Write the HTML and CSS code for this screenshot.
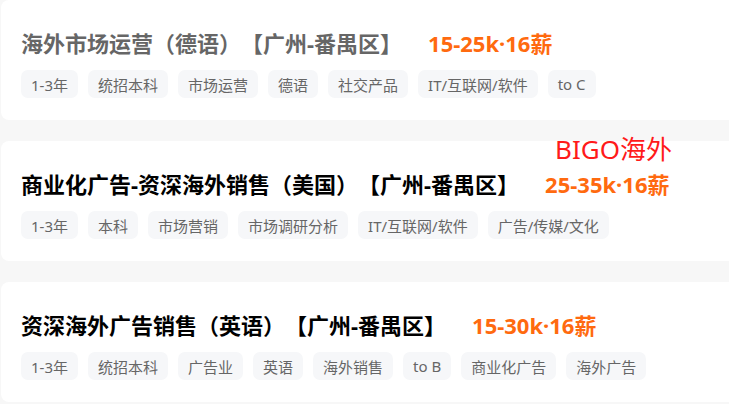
FILE: index.html
```html
<!DOCTYPE html>
<html lang="zh-CN">
<head>
  <meta charset="UTF-8">
  <title>职位列表</title>
  <link rel="stylesheet" href="styles.css">
</head>
<body>
  <div class="lista">
    <div class="tarjeta visitada">
      <div class="titulo-fila">
        <span class="titulo">海外市场运营（德语）【广州-番禺区】</span>
        <span class="salario">15-25k·16薪</span>
      </div>
      <div class="etiquetas">
        <span class="etiqueta">1-3年</span>
        <span class="etiqueta">统招本科</span>
        <span class="etiqueta">市场运营</span>
        <span class="etiqueta">德语</span>
        <span class="etiqueta">社交产品</span>
        <span class="etiqueta">IT/互联网/软件</span>
        <span class="etiqueta">to C</span>
      </div>
    </div>

    <div class="tarjeta">
      <span class="marca">BIGO海外</span>
      <div class="titulo-fila">
        <span class="titulo">商业化广告-资深海外销售（美国）【广州-番禺区】</span>
        <span class="salario">25-35k·16薪</span>
      </div>
      <div class="etiquetas">
        <span class="etiqueta">1-3年</span>
        <span class="etiqueta">本科</span>
        <span class="etiqueta">市场营销</span>
        <span class="etiqueta">市场调研分析</span>
        <span class="etiqueta">IT/互联网/软件</span>
        <span class="etiqueta">广告/传媒/文化</span>
      </div>
    </div>

    <div class="tarjeta">
      <div class="titulo-fila">
        <span class="titulo">资深海外广告销售（英语）【广州-番禺区】</span>
        <span class="salario">15-30k·16薪</span>
      </div>
      <div class="etiquetas">
        <span class="etiqueta">1-3年</span>
        <span class="etiqueta">统招本科</span>
        <span class="etiqueta">广告业</span>
        <span class="etiqueta">英语</span>
        <span class="etiqueta">海外销售</span>
        <span class="etiqueta">to B</span>
        <span class="etiqueta">商业化广告</span>
        <span class="etiqueta">海外广告</span>
      </div>
    </div>
  </div>
</body>
</html>
```

FILE: styles.css
```css
body {
  margin: 0;
  padding: 0;
  background-color: #f7f7f7;
  font-family: "Noto Sans", "Noto Sans CJK SC", sans-serif;
  text-spacing-trim: space-all;
  overflow: hidden;
}

.lista {
  display: flex;
  flex-direction: column;
  gap: 21px;
  width: 780px;
  padding-left: 1px;
}

.tarjeta {
  position: relative;
  background-color: #fff;
  border-radius: 8px;
  padding: 28px 20px 22px;
  height: 70px;
}

.titulo-fila {
  display: flex;
  align-items: center;
  height: 28px;
  gap: 26px;
}

.titulo {
  font-size: 22px;
  font-weight: bold;
  color: #000;
}

.visitada .titulo {
  color: #666;
}

.salario {
  font-size: 22px;
  font-weight: bold;
  color: #ff6a0f;
}

.etiquetas {
  display: flex;
  gap: 10px;
  margin-top: 14px;
}

.etiqueta {
  display: flex;
  align-items: center;
  height: 28px;
  padding: 0 10px;
  border-radius: 7px;
  background-color: #f6f7f9;
  color: #666;
  font-size: 15px;
}

/* marca roja encima */
.marca {
  position: absolute;
  left: 554px;
  top: -10px;
  font-size: 26px;
  color: #ff1a1a;
  line-height: 36px;
}
```
